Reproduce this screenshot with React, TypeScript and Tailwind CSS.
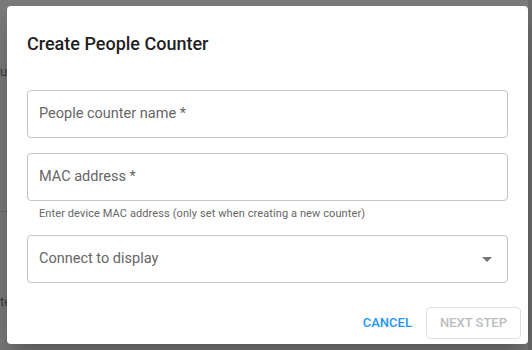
import React from "react";

interface FieldProps {
  label: string;
  required?: boolean;
  select?: boolean;
}

const Field: React.FC<FieldProps> = ({ label, required, select }) => {
  return (
    <div className="h-12 rounded border border-[#c4c4c4] flex items-center justify-between pl-[11px] pr-3">
      <span className="text-[14.5px] text-[#666666]">
        {label}
        {required && " *"}
      </span>
      {select && (
        <svg width="24" height="24" viewBox="0 0 24 24" className="fill-[#757575] -mr-1">
          <path d="M7 10l5 5 5-5z" />
        </svg>
      )}
    </div>
  );
};

export default function App() {
  return (
    <div
      className="w-[532px] h-[350px] bg-[#7a7a7a] relative overflow-hidden"
      style={{ fontFamily: "Roboto, 'Liberation Sans', sans-serif" }}
    >
      {/* faint page behind the backdrop */}
      <div className="absolute left-0 top-[62px] text-[13px] text-[#3a3a3a]">ur</div>
      <div className="absolute left-0 top-[292px] text-[13px] text-[#3a3a3a]">te</div>
      <div className="absolute left-0 top-[211px] w-[10px] h-px bg-[#6a6a6a]" />
      <div className="absolute right-0 top-0 w-[4px] h-full bg-[#6c6c6c]" />

      <div className="absolute left-[7px] top-[6px] w-[521px] h-[338px] bg-white rounded shadow-[0_11px_15px_-7px_rgba(0,0,0,0.2),0_24px_38px_3px_rgba(0,0,0,0.14)] flex flex-col">
        <h2 className="px-5 pt-[26px] text-[18px] leading-6 font-medium text-[#1f1f1f]">
          Create People Counter
        </h2>
        <div className="px-5 pt-[34px] flex flex-col">
          <Field label="People counter name" required />
          <div className="mt-[15px]">
            <Field label="MAC address" required />
          </div>
          <p className="mx-3 mt-[5px] text-[11px] leading-4 tracking-[0.1px] text-[#666666]">
            Enter device MAC address (only set when creating a new counter)
          </p>
          <div className="mt-[13px]">
            <Field label="Connect to display" select />
          </div>
        </div>
        <div className="mt-auto flex justify-end items-center gap-[6px] px-[7px] pb-[5px]">
          <button className="h-8 px-2 text-[13px] font-medium text-[#2196f3]">
            CANCEL
          </button>
          <button className="h-8 px-[13px] rounded border border-[#e0e0e0] text-[13px] font-medium text-[#bdbdbd]">
            NEXT STEP
          </button>
        </div>
      </div>
    </div>
  );
}
